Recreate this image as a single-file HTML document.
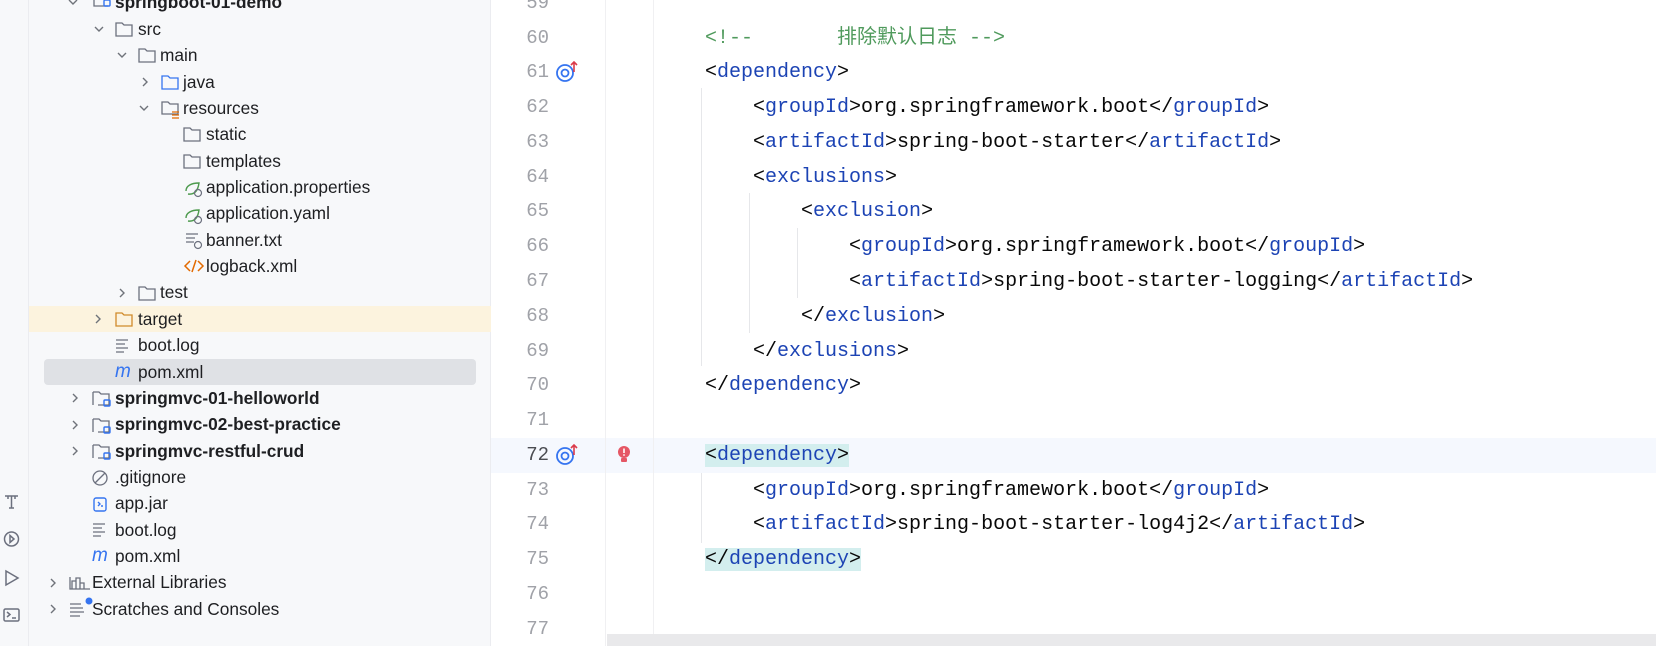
<!DOCTYPE html>
<html><head><meta charset="utf-8"><style>
*{margin:0;padding:0;box-sizing:border-box}
body{width:1656px;height:646px;overflow:hidden;background:#fff;position:relative;font-family:"Liberation Sans","Noto Sans CJK SC",sans-serif}
#strip{position:absolute;left:0;top:0;width:29px;height:646px;background:#f7f8fa;border-right:1px solid #ebecf0}
#tree{position:absolute;left:29px;top:0;width:462px;height:646px;background:#f7f8fa;border-right:1px solid #ebecf0}
.row{position:absolute;height:26px;line-height:26px;font-size:17.3px;color:#1e1f22;white-space:nowrap}
.ic{position:absolute}
#editor{position:absolute;left:491px;top:0;right:0;height:646px;background:#fff}
.ln{position:absolute;left:491px;width:58px;text-align:right;font-family:"Liberation Mono",monospace;font-size:19px;color:#a0a2a8;height:35px;line-height:35px}
.code{position:absolute;left:705px;font-family:"Liberation Mono","Noto Sans CJK SC",monospace;font-size:20px;color:#080808;height:35px;line-height:35px;white-space:pre}
.t{color:#1c43b4}
.c{color:#4f9a5c}
.hl{background:#d3eeee}
.guide{position:absolute;width:1px;background:#e6e7ea}
</style></head><body>
<div id="strip">
<svg class="ic" style="left:2px;top:492px" width="20" height="140" viewBox="0 0 20 140" fill="none" stroke="#6c707e" stroke-width="1.5">
<path d="M3 4h13M6 4v3M13 4v3M9.5 4v12M7 16h5"/>
<circle cx="9.5" cy="47" r="7"/><path d="M8 43.5l4 3.5-4 3.5z"/>
<path d="M4 79l12 7-12 7z"/>
<rect x="2" y="117" width="15" height="12" rx="1.5"/><path d="M5 120l3 2.5-3 2.5M10 126h4"/>
</svg>
</div>
<div id="tree">
<div style="position:absolute;left:0;top:306px;width:462px;height:26px;background:#fcf3de"></div>
<div style="position:absolute;left:15px;top:359px;width:432px;height:26px;background:#dfe1e5;border-radius:4px"></div>
</div>
<svg style="position:absolute;left:0;top:0" width="491" height="646">
<g fill="none" stroke="#6f737a" stroke-width="1.4">
<path d="M69 0l4 4 4-4M95 27l4 4 4-4M118 53l4 4 4-4M140 106l4 4 4-4"/>
<path d="M143 78l4 4-4 4M120 289l4 4-4 4M96 315l4 4-4 4M73 394l4 4-4 4M73 421l4 4-4 4M73 447l4 4-4 4M51 579l4 4-4 4M51 605l4 4-4 4"/>
</g>
<g fill="none" stroke="#6c707e" stroke-width="1.3">
<path d="M94 0v6h14M116 23h6l2 2h8v11h-16z"/>
<path d="M139 49h6l2 2h8v11h-16z"/>
<path d="M184 128h6l2 2h8v11h-16zM184 155h6l2 2h8v11h-16z"/>
<path d="M139 287h6l2 2h8v11h-16z"/>
<path d="M93 392h6l2 2h8v11h-11M93 392v13M93 419h6l2 2h8v11h-11M93 419v13M93 445h6l2 2h8v11h-11M93 445v13"/>
<path d="M116 340h12M116 344h9M116 348h12M116 352h8"/>
<path d="M93 524h12M93 528h9M93 532h12M93 536h8"/>
<path d="M186 234h12M186 238h9M186 242h8"/>
<circle cx="100" cy="478" r="7"/><path d="M95 483l10-10"/>
<path d="M70 577v12h20M72 589v-8h4v8M76 589v-11h4v11M80 589v-6h4v6"/>
<path d="M70 604h11M70 608h13M70 612h14M70 616h10"/>
</g>
<path d="M116 313h6l2 2h8v11h-16z" fill="none" stroke="#d08a2a" stroke-width="1.3"/>
<path d="M162 76h6l2 2h8v11h-16z" fill="none" stroke="#3574f0" stroke-width="1.3"/>
<path d="M162 102h6l2 2h8v10h-16z" fill="none" stroke="#6c707e" stroke-width="1.3"/>
<path d="M172 112h7M172 115h7M172 118h7" stroke="#e36a00" stroke-width="1.3"/>
<g fill="none" stroke="#3574f0" stroke-width="1.4"><rect x="104" y="0" width="6" height="6" rx="1"/><rect x="104" y="400" width="6" height="6" rx="1"/><rect x="104" y="427" width="6" height="6" rx="1"/><rect x="104" y="453" width="6" height="6" rx="1"/><rect x="94" y="498" width="12" height="13" rx="2"/><path d="M98 502l2 2-2 2M101 506h2"/></g>
<circle cx="89" cy="601" r="3.5" fill="#3574f0"/>
<g fill="none" stroke="#4d9a4d" stroke-width="1.4"><path d="M186 191c0-5 5-8 13-8-1 7-4 12-11 11M186 218c0-5 5-8 13-8-1 7-4 12-11 11"/></g>
<g fill="none" stroke="#6c707e" stroke-width="1.2"><circle cx="198" cy="193" r="3.5"/><circle cx="198" cy="220" r="3.5"/><circle cx="198" cy="245" r="3.5"/></g>
<path d="M190 261l-5 5 5 5M198 261l5 5-5 5M196 260l-4 12" fill="none" stroke="#e36a00" stroke-width="1.5"/>
</svg>
<div class="row" style="left:115px;top:-11px;font-weight:bold">springboot-01-demo</div>
<div class="row" style="left:138px;top:16px">src</div>
<div class="row" style="left:160px;top:42px">main</div>
<div class="row" style="left:183px;top:69px">java</div>
<div class="row" style="left:183px;top:95px">resources</div>
<div class="row" style="left:206px;top:121px">static</div>
<div class="row" style="left:206px;top:148px">templates</div>
<div class="row" style="left:206px;top:174px">application.properties</div>
<div class="row" style="left:206px;top:200px">application.yaml</div>
<div class="row" style="left:206px;top:227px">banner.txt</div>
<div class="row" style="left:206px;top:253px">logback.xml</div>
<div class="row" style="left:160px;top:279px">test</div>
<div class="row" style="left:138px;top:306px">target</div>
<div class="row" style="left:138px;top:332px">boot.log</div>
<div class="row" style="left:115px;top:359px;font-style:italic;color:#3574f0;font-size:19px">m</div>
<div class="row" style="left:138px;top:359px">pom.xml</div>
<div class="row" style="left:115px;top:385px;font-weight:bold">springmvc-01-helloworld</div>
<div class="row" style="left:115px;top:411px;font-weight:bold">springmvc-02-best-practice</div>
<div class="row" style="left:115px;top:438px;font-weight:bold">springmvc-restful-crud</div>
<div class="row" style="left:115px;top:464px">.gitignore</div>
<div class="row" style="left:115px;top:490px">app.jar</div>
<div class="row" style="left:115px;top:517px">boot.log</div>
<div class="row" style="left:92px;top:543px;font-style:italic;color:#3574f0;font-size:19px">m</div>
<div class="row" style="left:115px;top:543px">pom.xml</div>
<div class="row" style="left:92px;top:569px">External Libraries</div>
<div class="row" style="left:92px;top:596px">Scratches and Consoles</div>

<div id="editor"></div>
<div style="position:absolute;left:491px;top:438px;width:1165px;height:35px;background:#f5f8fe"></div>
<div style="position:absolute;left:605px;top:0;width:1px;height:646px;background:#f0f0f2"></div>
<div style="position:absolute;left:653px;top:0;width:1px;height:634px;background:#f0f0f2"></div>
<div class="guide" style="left:701px;top:88px;height:278px"></div>
<div class="guide" style="left:749px;top:193px;height:140px"></div>
<div class="guide" style="left:797px;top:228px;height:70px"></div>
<div class="guide" style="left:701px;top:473px;height:70px"></div>
<div style="position:absolute;left:607px;top:634px;width:1049px;height:12px;background:#e9e9eb"></div>

<div class="ln" style="top:-14px">59</div>
<div class="ln" style="top:21px">60</div>
<div class="ln" style="top:55px">61</div>
<div class="ln" style="top:90px">62</div>
<div class="ln" style="top:125px">63</div>
<div class="ln" style="top:160px">64</div>
<div class="ln" style="top:194px">65</div>
<div class="ln" style="top:229px">66</div>
<div class="ln" style="top:264px">67</div>
<div class="ln" style="top:299px">68</div>
<div class="ln" style="top:334px">69</div>
<div class="ln" style="top:368px">70</div>
<div class="ln" style="top:403px">71</div>
<div class="ln" style="top:438px;color:#4a4c52">72</div>
<div class="ln" style="top:473px">73</div>
<div class="ln" style="top:507px">74</div>
<div class="ln" style="top:542px">75</div>
<div class="ln" style="top:577px">76</div>
<div class="ln" style="top:612px">77</div>

<svg style="position:absolute;left:555px;top:60px" width="26" height="24"><circle cx="10" cy="13" r="8" fill="none" stroke="#3574f0" stroke-width="1.8"/><circle cx="10" cy="13" r="3.5" fill="none" stroke="#3574f0" stroke-width="1.8"/><path d="M19 12V2M16 5l3-3 3 3" stroke="#db3b4b" stroke-width="1.6" fill="none"/></svg>
<svg style="position:absolute;left:555px;top:443px" width="26" height="24"><circle cx="10" cy="13" r="8" fill="none" stroke="#3574f0" stroke-width="1.8"/><circle cx="10" cy="13" r="3.5" fill="none" stroke="#3574f0" stroke-width="1.8"/><path d="M19 12V2M16 5l3-3 3 3" stroke="#db3b4b" stroke-width="1.6" fill="none"/></svg>
<svg style="position:absolute;left:617px;top:445px" width="14" height="20"><circle cx="7" cy="7" r="6" fill="#e55765"/><rect x="4" y="13" width="6" height="4" rx="1" fill="#e55765"/><path d="M7 3.5v4.5" stroke="#fff" stroke-width="1.6"/><circle cx="7" cy="10" r="0.9" fill="#fff"/></svg>

<div class="code c" style="top:21px">&lt;!--       排除默认日志 --&gt;</div>
<div class="code" style="top:55px">&lt;<span class="t">dependency</span>&gt;</div>
<div class="code" style="top:90px">    &lt;<span class="t">groupId</span>&gt;org.springframework.boot&lt;/<span class="t">groupId</span>&gt;</div>
<div class="code" style="top:125px">    &lt;<span class="t">artifactId</span>&gt;spring-boot-starter&lt;/<span class="t">artifactId</span>&gt;</div>
<div class="code" style="top:160px">    &lt;<span class="t">exclusions</span>&gt;</div>
<div class="code" style="top:194px">        &lt;<span class="t">exclusion</span>&gt;</div>
<div class="code" style="top:229px">            &lt;<span class="t">groupId</span>&gt;org.springframework.boot&lt;/<span class="t">groupId</span>&gt;</div>
<div class="code" style="top:264px">            &lt;<span class="t">artifactId</span>&gt;spring-boot-starter-logging&lt;/<span class="t">artifactId</span>&gt;</div>
<div class="code" style="top:299px">        &lt;/<span class="t">exclusion</span>&gt;</div>
<div class="code" style="top:334px">    &lt;/<span class="t">exclusions</span>&gt;</div>
<div class="code" style="top:368px">&lt;/<span class="t">dependency</span>&gt;</div>
<div class="code" style="top:438px"><span class="hl">&lt;<span class="t">dependency</span>&gt;</span></div>
<div class="code" style="top:473px">    &lt;<span class="t">groupId</span>&gt;org.springframework.boot&lt;/<span class="t">groupId</span>&gt;</div>
<div class="code" style="top:507px">    &lt;<span class="t">artifactId</span>&gt;spring-boot-starter-log4j2&lt;/<span class="t">artifactId</span>&gt;</div>
<div class="code" style="top:542px"><span class="hl">&lt;/<span class="t">dependency</span>&gt;</span></div>
</body></html>
